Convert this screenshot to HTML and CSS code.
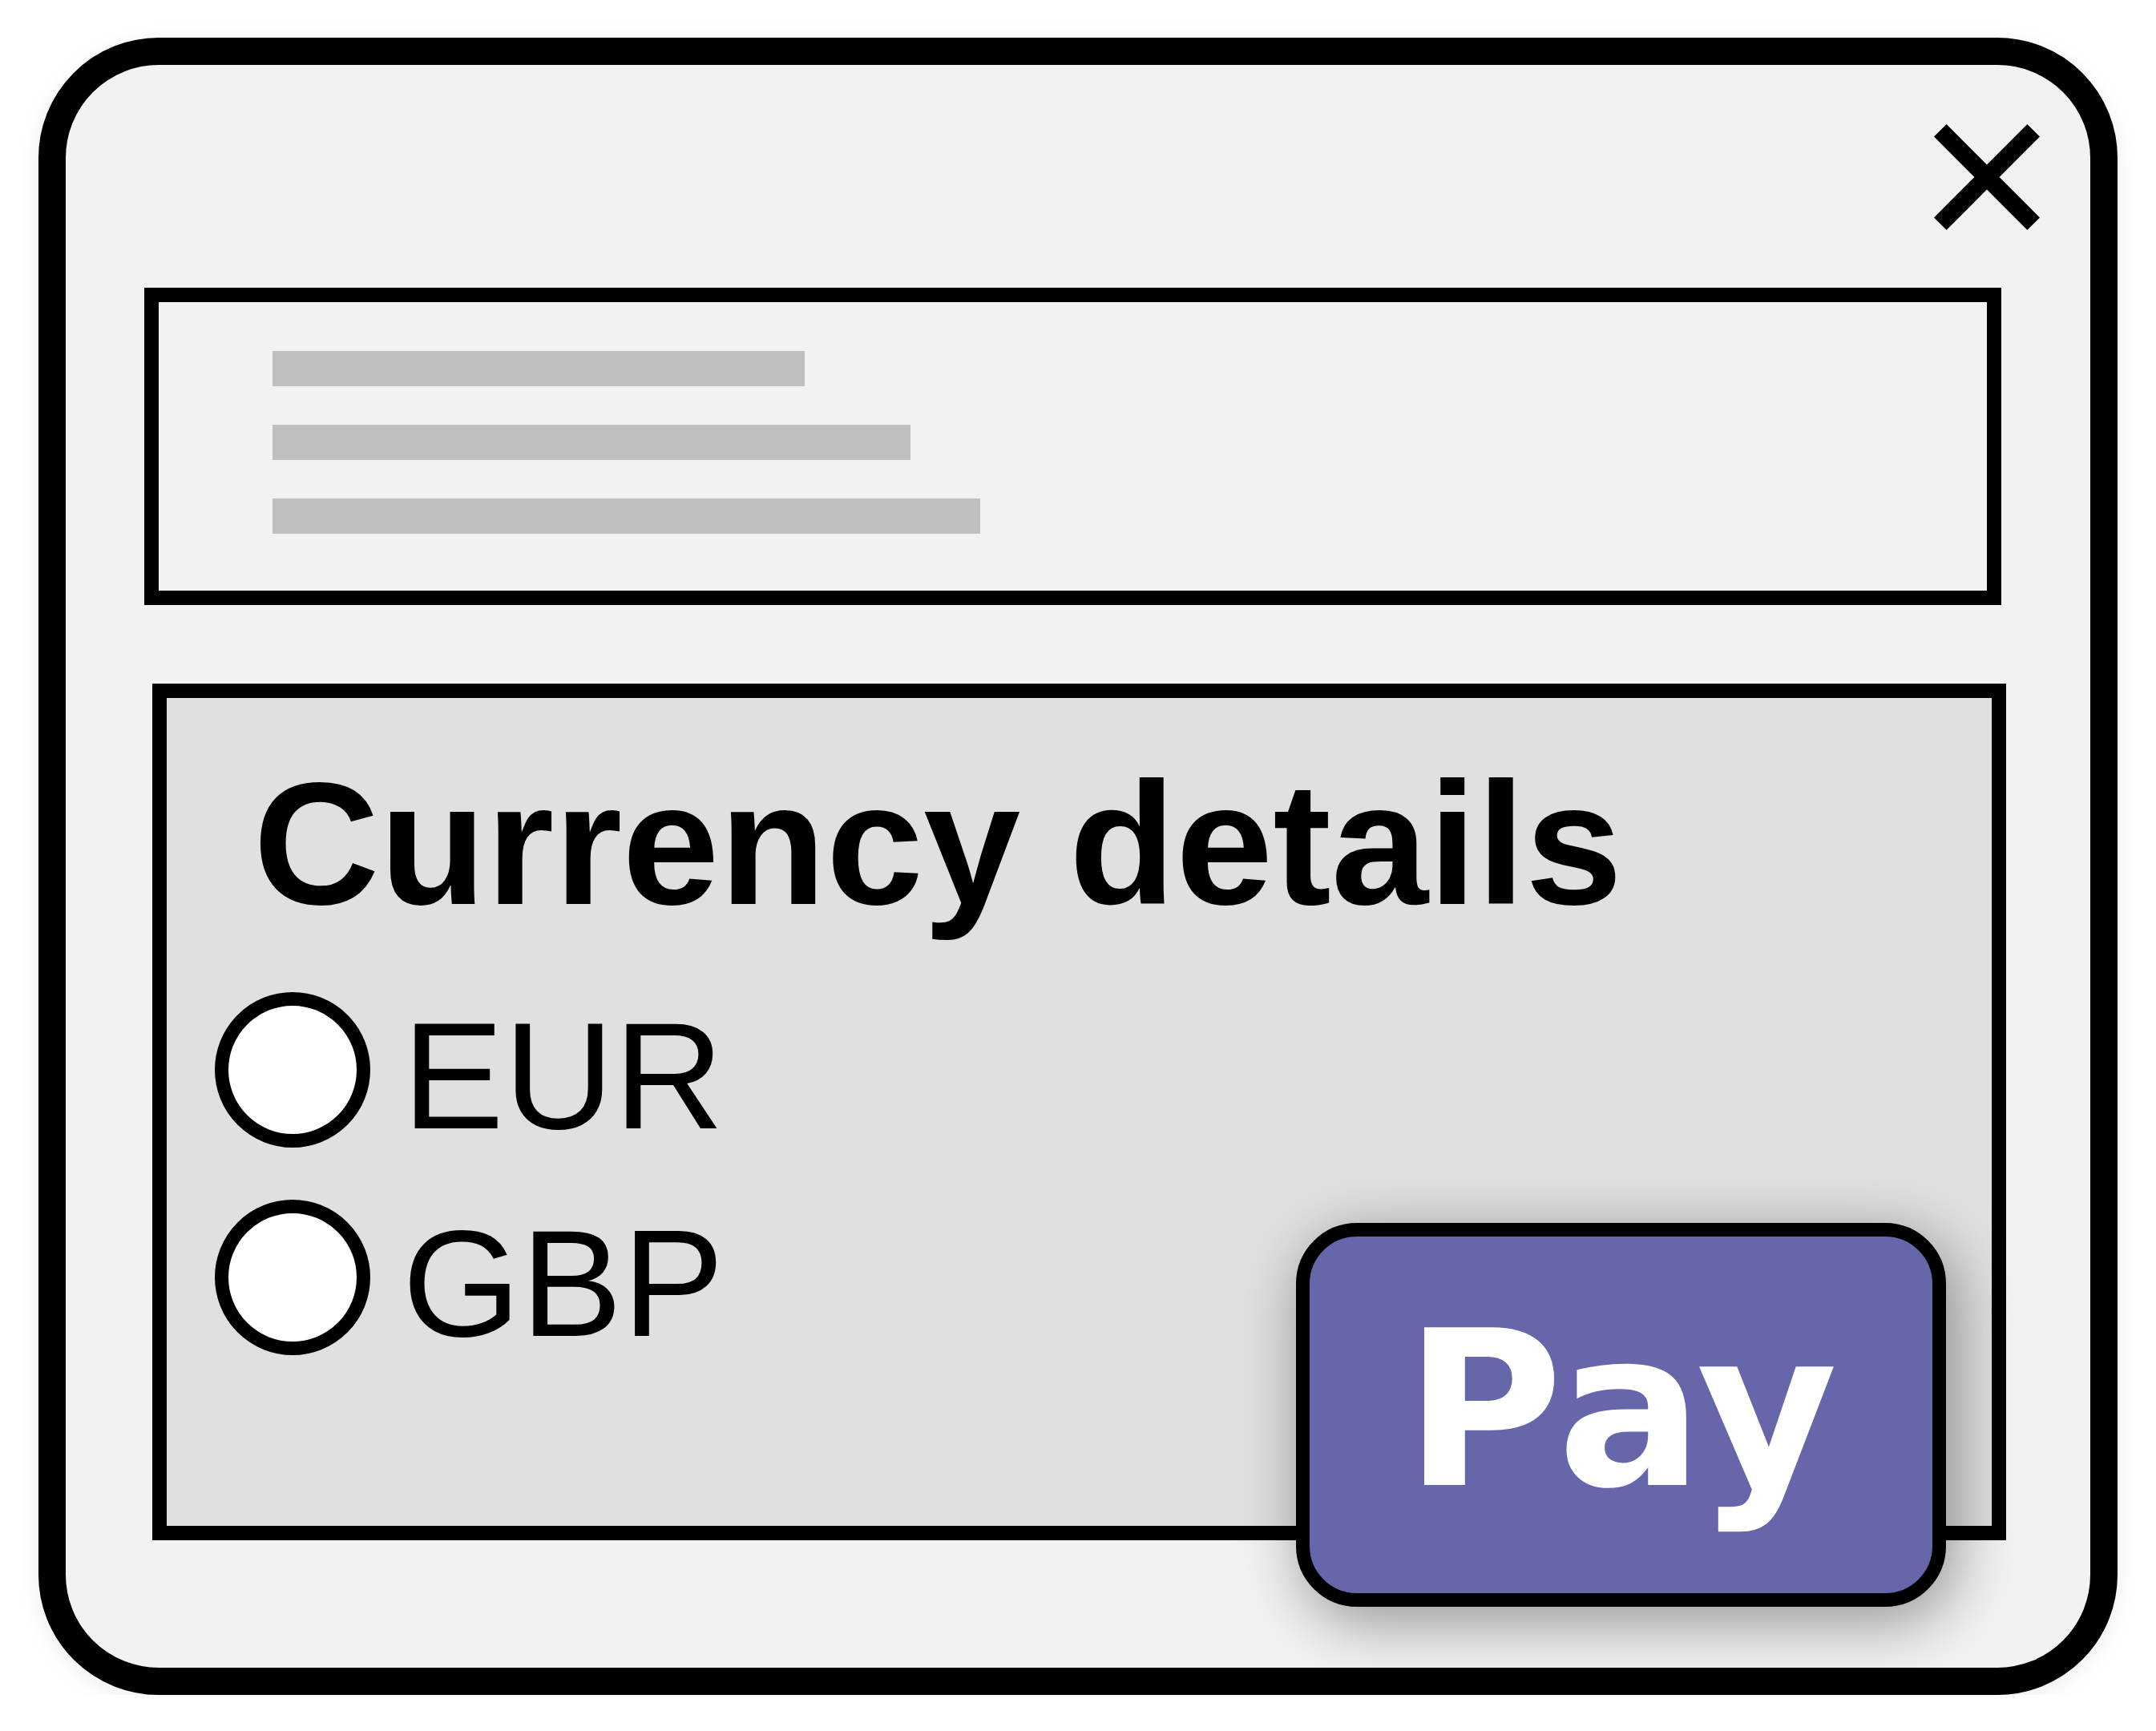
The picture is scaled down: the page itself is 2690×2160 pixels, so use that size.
FILE: index.html
```html
<!DOCTYPE html>
<html lang="en">
<head>
  <meta charset="UTF-8" />
  <meta name="viewport" content="width=device-width, initial-scale=1.0"/>
  <title>Currency details</title>
  <link rel="stylesheet" href="styles.css">
</head>
<body>
  <div class="modal">
    <div class="modal-head">
      <button class="close-btn" aria-label="Close">
        <svg width="132" height="132" viewBox="0 0 132 132">
          <polygon fill="#000" points="0,15.6 15.6,0 66,50.4 116.4,0 132,15.6 81.6,66 132,116.4 116.4,132 66,81.6 15.6,132 0,116.4 50.4,66" />
        </svg>
      </button>
    </div>

    <div class="summary">
      <div class="line line-1"></div>
      <div class="line line-2"></div>
      <div class="line line-3"></div>
    </div>

    <div class="currency">
      <h2>Currency details</h2>
      <div class="options">
        <label class="option"><span class="radio"></span><span class="option-text">EUR</span></label>
        <label class="option"><span class="radio"></span><span class="option-text">GBP</span></label>
      </div>
    </div>

    <a href="#" class="pay-button">Pay</a>
  </div>
</body>
</html>
```

FILE: styles.css
```css
body {
  margin: 0;
  padding: 47px 0 0 48px;
  background-color: #fff;
  font-family: 'Liberation Sans', Arial, sans-serif;
}

.modal {
  position: relative;
  box-sizing: border-box;
  width: 2594px;
  height: 2068px;
  border: 34px solid #000;
  border-radius: 150px;
  background-color: #f2f2f2;
  box-shadow: 0 6px 30px rgba(0,0,0,0.07);
  display: flex;
  flex-direction: column;
}

.modal-head {
  display: flex;
  justify-content: flex-end;
  padding: 74px 63px 0 0;
}

.close-btn {
  display: block;
  width: 132px;
  height: 132px;
  padding: 0;
  border: 0;
  background: none;
}

.close-btn svg {
  display: block;
}

.summary {
  box-sizing: border-box;
  height: 396px;
  margin: 72px 111px 0 98px;
  border: 18px solid #000;
  padding: 61px 0 0 142px;
  display: flex;
  flex-direction: column;
  gap: 48px;
}

.line {
  height: 44px;
  background-color: #bfbfbf;
}

.line-1 { width: 664px; }
.line-2 { width: 796px; }
.line-3 { width: 883px; }

.currency {
  box-sizing: border-box;
  height: 1069px;
  margin: 98px 105px 0 108px;
  border: 18px solid #000;
  background-color: #e0e0e0;
  padding: 73px 0 0 60px;
}

.currency h2 {
  margin: 0 0 0 48px;
  font-size: 218px;
  font-weight: 700;
  line-height: 1;
  color: #000;
}

.options {
  margin-top: 76px;
  display: flex;
  flex-direction: column;
  gap: 65px;
}

.option {
  display: flex;
  align-items: center;
  gap: 40px;
  height: 194px;
}

.radio {
  box-sizing: border-box;
  width: 194px;
  height: 194px;
  border: 17px solid #000;
  border-radius: 50%;
  background-color: #fff;
  flex-shrink: 0;
}

.option-text {
  margin-top: 14px;
  font-size: 190px;
  line-height: 1;
  color: #000;
}

.pay-button {
  position: absolute;
  right: 180px;
  bottom: 76px;
  box-sizing: border-box;
  width: 811px;
  height: 479px;
  border: 17px solid #000;
  border-radius: 76px;
  background-color: #6666aa;
  color: #fff;
  font-family: 'DejaVu Sans', sans-serif;
  font-weight: 700;
  font-size: 270px;
  line-height: 1;
  text-decoration: none;
  display: flex;
  align-items: center;
  justify-content: center;
  padding-bottom: 12px;
  box-shadow: 10px 18px 80px rgba(0,0,0,0.4);
}
```
